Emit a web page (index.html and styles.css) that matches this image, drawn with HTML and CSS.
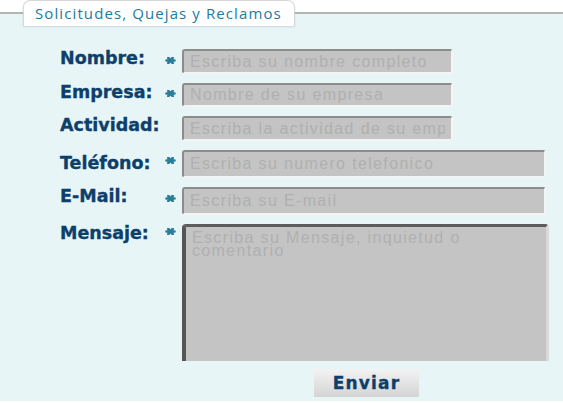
FILE: index.html
```html
<!DOCTYPE html>
<html lang="es">
<head>
<meta charset="utf-8">
<title>Solicitudes, Quejas y Reclamos</title>
<link rel="stylesheet" href="styles.css">
</head>
<body>
<form class="sqr">
  <fieldset class="box">
    <legend class="tab">Solicitudes, Quejas y Reclamos</legend>
    <div class="grid">
      <label class="lbl" for="f-nombre">Nombre:</label>
      <span class="req"><svg class="star" viewBox="0 0 10 7" aria-hidden="true"><path d="M1 3.5H9M2.8 0.9L7.2 6.1M7.2 0.9L2.8 6.1"/></svg></span>
      <input class="fld short" id="f-nombre" type="text" placeholder="Escriba su nombre completo">

      <label class="lbl" for="f-empresa">Empresa:</label>
      <span class="req req-up"><svg class="star" viewBox="0 0 10 7" aria-hidden="true"><path d="M1 3.5H9M2.8 0.9L7.2 6.1M7.2 0.9L2.8 6.1"/></svg></span>
      <input class="fld short thin" id="f-empresa" type="text" placeholder="Nombre de su empresa">

      <label class="lbl" for="f-actividad">Actividad:</label>
      <span class="req"></span>
      <input class="fld short" id="f-actividad" type="text" placeholder="Escriba la actividad de su empresa">

      <label class="lbl lbl-tel" for="f-tel">Teléfono:</label>
      <span class="req req-up"><svg class="star" viewBox="0 0 10 7" aria-hidden="true"><path d="M1 3.5H9M2.8 0.9L7.2 6.1M7.2 0.9L2.8 6.1"/></svg></span>
      <input class="fld long" id="f-tel" type="text" placeholder="Escriba su numero telefonico">

      <label class="lbl" for="f-mail">E-Mail:</label>
      <span class="req"><svg class="star" viewBox="0 0 10 7" aria-hidden="true"><path d="M1 3.5H9M2.8 0.9L7.2 6.1M7.2 0.9L2.8 6.1"/></svg></span>
      <input class="fld long" id="f-mail" type="text" placeholder="Escriba su E-mail">

      <label class="lbl" for="f-msg">Mensaje:</label>
      <span class="req req-top"><svg class="star" viewBox="0 0 10 7" aria-hidden="true"><path d="M1 3.5H9M2.8 0.9L7.2 6.1M7.2 0.9L2.8 6.1"/></svg></span>
      <textarea class="msg" id="f-msg" placeholder="Escriba su Mensaje, inquietud o&#10;comentario"></textarea>

      <span></span>
      <span></span>
      <div class="actions"><button class="send" type="button">Enviar</button></div>
    </div>
  </fieldset>
</form>
</body>
</html>
```
FILE: styles.css
```css
html, body {
  margin: 0;
  padding: 0;
  background: #ffffff;
}
body {
  width: 563px;
  height: 403px;
  overflow: hidden;
}
.sqr {
  margin: 0;
}
.box {
  margin: 0;
  padding: 23px 0 4px 0;
  min-width: 0;
  border: none;
  border-top: 2px solid #b4b4b4;
  background: #e7f5f7;
}
.tab {
  margin-left: 23px;
  padding: 0 12px 0 11px;
  height: 25px;
  line-height: 25px;
  background: #ffffff;
  border: 1px solid #d8d8d8;
  border-bottom: none;
  border-radius: 7px 7px 0 0;
  font-family: "Open Sans", "DejaVu Sans", sans-serif;
  font-size: 15px;
  letter-spacing: 1.1px;
  color: #1b7b9d;
  box-shadow: 0 1px 2px rgba(0,0,0,0.12);
}
.grid {
  display: grid;
  grid-template-columns: 105px 17px auto;
  row-gap: 9px;
  padding-left: 60px;
  align-items: start;
}
.lbl {
  font-family: "DejaVu Sans", Verdana, sans-serif;
  font-weight: bold;
  font-size: 17.5px;
  line-height: 18px;
  color: #0e3f6b;
  white-space: nowrap;
  -webkit-text-stroke: 0.35px #0e3f6b;
}
.lbl-tel {
  margin-top: 4px;
}
.req {
  display: block;
  height: 8px;
  margin-top: 8px;
}
.req-up { margin-top: 7px; }
.req-top { margin-top: 4px; }
.star {
  display: block;
  width: 11px;
  height: 7px;
  fill: none;
  stroke: #2a7e9b;
  stroke-width: 2.6;
  stroke-linecap: round;
}
.fld {
  box-sizing: border-box;
  height: 25px;
  margin: 0;
  padding: 0 6px;
  background: #c4c4c4;
  border-style: solid;
  border-width: 2px;
  border-color: #8c8c8c #f4f4f4 #f4f4f4 #8c8c8c;
  border-radius: 3px;
  font-family: "Liberation Sans", Arial, sans-serif;
  font-size: 16px;
  letter-spacing: 1.35px;
  color: #555;
  outline: none;
}
.fld.thin { height: 24px; }
.short { width: 271px; }
.long { width: 364px; height: 28px; }
.fld::placeholder, .msg::placeholder {
  color: #b0b0b0;
  opacity: 1;
}
.msg {
  box-sizing: border-box;
  width: 367px;
  height: 137px;
  margin: 0;
  padding: 4px 6px;
  background: #c4c4c4;
  border-style: solid;
  border-width: 3px 3px 0 4px;
  border-color: #5c5c5c #dadada #dadada #555555;
  border-radius: 4px 4px 0 0;
  font-family: "Liberation Sans", Arial, sans-serif;
  font-size: 16px;
  line-height: 13px;
  letter-spacing: 1.35px;
  resize: none;
  outline: none;
}
.actions {
  padding-left: 132px;
  margin-top: -1px;
}
.send {
  width: 105px;
  height: 28px;
  margin: 0;
  padding: 0;
  border: none;
  border-radius: 1px;
  background: linear-gradient(#f3f3f3, #d4d4d4);
  font-family: "DejaVu Sans", Verdana, sans-serif;
  font-weight: bold;
  font-size: 17px;
  letter-spacing: 1.2px;
  color: #0e3f6b;
  -webkit-text-stroke: 0.35px #0e3f6b;
  cursor: pointer;
}
```
